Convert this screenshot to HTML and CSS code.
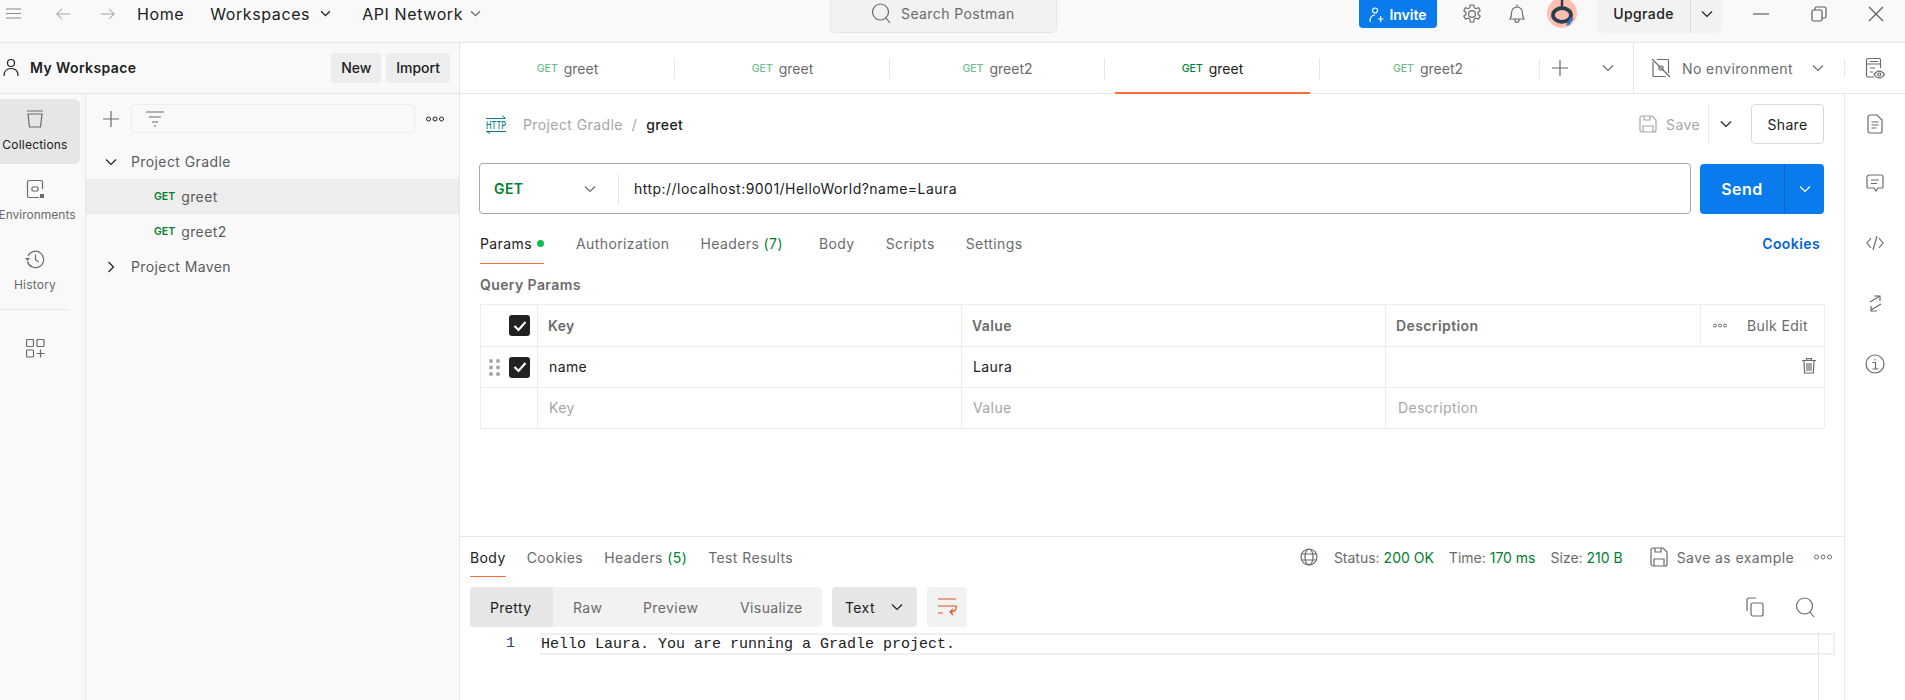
FILE: index.html
```html
<!DOCTYPE html>
<html lang="en">
  <head>
    <meta charset="UTF-8" />
    <title>Postman</title>
    <link rel="stylesheet" href="styles.css">
  </head>
  <body>
    <header class="topbar">
      <div class="top-left">
        <svg class="ico hamburger" width="16" height="11" viewBox="0 0 16 11"><path d="M0 1h15M0 5.500h15M0 10h15"/></svg>
        <svg class="ico nav-arrow" width="16" height="14" viewBox="0 0 18 16"><path d="M17 8H2M8 2 2 8l6 6"/></svg>
        <svg class="ico nav-arrow nav-forward" width="16" height="14" viewBox="0 0 18 16"><path d="M1 8h15M10 2l6 6-6 6"/></svg>
        <span class="top-link home-link">Home</span>
        <span class="top-link ws-link">Workspaces</span>
        <svg class="ico chev-dark ws-chev" width="11" height="7" viewBox="0 0 12 8"><path d="m1 1.500 5 5 5-5"/></svg>
        <span class="top-link api-link">API Network</span>
        <svg class="ico chev-dark api-chev" width="11" height="7" viewBox="0 0 12 8"><path d="m1 1.500 5 5 5-5"/></svg>
      </div>
      <div class="search">
        <svg class="ico" width="20" height="22" viewBox="0 0 20 22"><circle cx="9.500" cy="10" r="8"/><path d="m15 16 4 5"/></svg>
        <span>Search Postman</span>
      </div>
      <div class="top-right">
        <button class="invite">
          <svg class="ico" width="15" height="17" viewBox="0 0 15 17"><circle cx="6" cy="4.500" r="2.500"/><path d="M1 16c0-5 2-7 5-7M9 13h5.500M11.700 10v6"/></svg>
          Invite
        </button>
        <svg class="ico gear" width="20" height="20" viewBox="0 0 20 20"><path d="M8.300 1h3.400l.5 2.700 1.700 1 2.600-1 1.700 3-2.100 1.700v2l2.100 1.700-1.700 3-2.600-1-1.700 1-.5 2.900H8.300l-.5-2.900-1.700-1-2.600 1-1.700-3 2.100-1.700v-2L1.800 6.700l1.700-3 2.600 1 1.700-1z"/><circle cx="10" cy="10" r="3.400"/></svg>
        <svg class="ico bell" width="18" height="22" viewBox="0 0 18 22"><path d="M2 16c1.200-1.500 1.500-3 1.500-6 0-3.500 2.500-6 5.500-6s5.500 2.500 5.500 6c0 3 .3 4.500 1.500 6zM9 4V1.500M7 16.500c0 4 4 4 4 0"/></svg>
        <svg class="avatar" width="30" height="30" viewBox="0 0 30 30">
          <ellipse cx="15" cy="15" rx="15" ry="15" fill="#fcbfb1"/>
          <path d="M3 20 17 2M9 28 28 7" stroke="#f9a896" fill="none"/>
          <ellipse cx="15" cy="17" rx="9" ry="6.800" fill="#fcbfb1" stroke="#2c3d4a" stroke-width="3.800"/>
          <rect x="13.800" y="0" width="2.400" height="9" fill="#2c3d4a"/>
          <path d="m20 25 4-6 2.500 1.800-4 6-3 1z" fill="#2f6fd0"/>
        </svg>
        <div class="upgrade">
          <span class="upgrade-label">Upgrade</span>
          <span class="upgrade-caret">
            <svg class="ico chev-dark" width="12" height="8" viewBox="0 0 12 8"><path d="m1 1.500 5 5 5-5"/></svg>
          </span>
        </div>
        <svg class="ico win-btn win-min" width="16" height="2" viewBox="0 0 16 2"><path d="M0 1h16"/></svg>
        <svg class="ico win-btn win-max" width="16" height="16" viewBox="0 0 16 16"><rect x="1" y="4" width="10" height="11" rx="1.500"/><path d="M4 4V2.500Q4 1 5.500 1H13.500Q15 1 15 2.500V10.500Q15 12 13.500 12H11"/></svg>
        <svg class="ico win-btn win-close" width="16" height="16" viewBox="0 0 16 16"><path d="m1 1 14 14M15 1 1 15"/></svg>
      </div>
    </header>

    <div class="main">
      <aside class="sidebar">
        <div class="ws-head">
          <svg class="ico ws-user" width="18" height="20" viewBox="0 0 18 20"><circle cx="9" cy="5" r="3.500"/><path d="M2 18c0-5 3-7.500 7-7.500s7 2.500 7 7.500"/></svg>
          <span class="ws-name">My Workspace</span>
          <button class="soft-btn new-btn">New</button>
          <button class="soft-btn">Import</button>
        </div>
        <div class="side-body">
          <nav class="rail">
            <div class="rail-item rail-active">
              <svg class="ico" width="18" height="20" viewBox="0 0 18 20"><path d="M1 2h16M2 5h14l-1.500 13h-11z"/></svg>
              <span>Collections</span>
            </div>
            <div class="rail-item">
              <svg class="ico" width="18" height="20" viewBox="0 0 18 20"><path d="M16.500 10V3a1.500 1.500 0 0 0-1.500-1.500H3A1.500 1.500 0 0 0 1.500 3v14A1.500 1.500 0 0 0 3 18.500h10"/><rect x="6" y="8" width="6" height="4" rx="1"/><rect x="14" y="15" width="4" height="4" fill="currentColor" stroke="none"/></svg>
              <span class="rail-env">Environments</span>
            </div>
            <div class="rail-item">
              <svg class="ico" width="20" height="20" viewBox="0 0 20 20"><path d="M3 7a8.200 8.200 0 1 1-.5 5.500M10.500 5.500V10.500l3 2.500"/><path d="M0 9h5L2.500 12z" fill="currentColor" stroke="none"/></svg>
              <span>History</span>
            </div>
            <div class="rail-sep"></div>
            <svg class="ico rail-add" width="19" height="19" viewBox="0 0 19 19"><rect x=".5" y=".5" width="7" height="7" rx="1"/><rect x="11" y=".5" width="7" height="7" rx="1"/><rect x=".5" y="11" width="7" height="7" rx="1"/><path d="M10.500 14.500h8M14.500 10.500v8"/></svg>
          </nav>
          <div class="tree">
            <div class="tree-tools">
              <svg class="ico" width="16" height="16" viewBox="0 0 16 16"><path d="M8 0v16M0 8h16"/></svg>
              <div class="filter">
                <svg class="ico" width="18" height="16" viewBox="0 0 18 16"><path d="M0 1h18M3 6h12M6 11h6M8 15h2"/></svg>
              </div>
              <svg class="dots" width="18" height="6" viewBox="0 0 18 6"><circle cx="2.500" cy="3" r="2"/><circle cx="9" cy="3" r="2"/><circle cx="15.500" cy="3" r="2"/></svg>
            </div>
            <div class="tree-list">
              <div class="tree-row">
                <svg class="ico chev-dark tree-chev" width="12" height="8" viewBox="0 0 12 8"><path d="m1 1.500 5 5 5-5"/></svg>
                <span>Project Gradle</span>
              </div>
              <div class="tree-row tree-req tree-selected"><span class="get">GET</span><span>greet</span></div>
              <div class="tree-row tree-req"><span class="get">GET</span><span>greet2</span></div>
              <div class="tree-row">
                <svg class="ico chev-dark tree-chev-right" width="8" height="12" viewBox="0 0 8 12"><path d="m1.500 1 5 5-5 5"/></svg>
                <span>Project Maven</span>
              </div>
            </div>
          </div>
        </div>
      </aside>

      <section class="content">
        <div class="tabbar">
          <div class="tab"><span class="get">GET</span><span>greet</span></div>
          <div class="tab"><span class="get">GET</span><span>greet</span></div>
          <div class="tab"><span class="get">GET</span><span>greet2</span></div>
          <div class="tab tab-active"><span class="get">GET</span><span>greet</span></div>
          <div class="tab tab-last"><span class="get">GET</span><span>greet2</span></div>
          <div class="tab-tools">
            <svg class="ico" width="16" height="16" viewBox="0 0 16 16"><path d="M8 0v16M0 8h16"/></svg>
            <svg class="ico" width="12" height="8" viewBox="0 0 12 8"><path d="m1 1.500 5 5 5-5"/></svg>
          </div>
          <div class="env">
            <svg class="ico" width="20" height="20" viewBox="0 0 20 20"><path d="M17.500 15V2.500a1 1 0 0 0-1-1H6M2 4v13.500a1 1 0 0 0 1 1h11.500M1 1l18 18"/><rect x="8" y="8" width="4" height="4" rx="1"/></svg>
            <span class="env-name">No environment</span>
            <svg class="ico env-chev" width="12" height="8" viewBox="0 0 12 8"><path d="m1 1.500 5 5 5-5"/></svg>
          </div>
          <div class="env-view">
            <svg class="ico" width="20" height="22" viewBox="0 0 20 22"><path d="M9 20H3a1.500 1.500 0 0 1-1.500-1.500V3A1.500 1.500 0 0 1 3 1.500h11A1.500 1.500 0 0 1 15.500 3v8M1.500 7h14M5 11h5M5 15h3M5 4.500h8"/><path d="M9 17.500c3-4.500 7.500-4.500 10.500 0-3 4.500-7.500 4.500-10.500 0z"/><circle cx="14.300" cy="17.500" r="1.500"/></svg>
          </div>
        </div>

        <div class="work">
          <div class="panes">
            <div class="request">
              <div class="req-head">
                <svg class="http-icon" width="20" height="19" viewBox="0 0 20 19">
                  <path d="M0 3.500h19.500M16 .5l3.500 3M20 16.500H.5M4 18.500l-3.500-2" fill="none" stroke="#097a87"/>
                  <text transform="scale(.68 1)" x="0" y="14" class="http-text">HTTP</text>
                </svg>
                <span class="crumb">Project Gradle</span>
                <span class="crumb crumb-slash">/</span>
                <span class="crumb-current">greet</span>
                <div class="req-actions">
                  <svg class="ico save-ico" width="18" height="18" viewBox="0 0 18 18"><path d="M1 3a2 2 0 0 1 2-2h10l4 4v10a2 2 0 0 1-2 2H3a2 2 0 0 1-2-2zM5 1v4h6V1M4 17v-6h10v6"/></svg>
                  <span class="save-label">Save</span>
                  <span class="save-caret">
                    <svg class="ico chev-dark" width="12" height="8" viewBox="0 0 12 8"><path d="m1 1.500 5 5 5-5"/></svg>
                  </span>
                  <button class="share">Share</button>
                </div>
              </div>

              <div class="url-line">
                <div class="url-bar">
                  <span class="method">GET</span>
                  <svg class="ico" width="12" height="8" viewBox="0 0 12 8"><path d="m1 1.500 5 5 5-5"/></svg>
                  <span class="url-sep"></span>
                  <span class="url-text">http://localhost:9001/HelloWorld?name=Laura</span>
                </div>
                <div class="send">
                  <span class="send-label">Send</span>
                  <span class="send-caret">
                    <svg class="ico" width="12" height="8" viewBox="0 0 12 8"><path d="m1 1.500 5 5 5-5"/></svg>
                  </span>
                </div>
              </div>

              <div class="req-tabs">
                <span class="req-tab req-tab-active"><span>Params</span><i class="dot"></i></span>
                <span class="req-tab req-tab-auth">Authorization</span>
                <span class="req-tab">Headers <em>(7)</em></span>
                <span class="req-tab req-tab-body">Body</span>
                <span class="req-tab">Scripts</span>
                <span class="req-tab">Settings</span>
                <span class="cookies-link">Cookies</span>
              </div>

              <div class="query-title">Query Params</div>

              <div class="params">
                <div class="param-row param-head">
                  <div class="cell cell-check"><span class="check"><svg width="14" height="12" viewBox="0 0 14 12"><path d="m1.500 6 4 4 7-8" fill="none" stroke="#fff" stroke-width="2.200"/></svg></span></div>
                  <div class="cell">Key</div>
                  <div class="cell">Value</div>
                  <div class="cell cell-desc">
                    <span class="desc-label">Description</span>
                    <div class="bulk">
                      <svg class="dots dots-dark" width="14" height="5" viewBox="0 0 14 5"><circle cx="2" cy="2.500" r="1.500"/><circle cx="7" cy="2.500" r="1.500"/><circle cx="12" cy="2.500" r="1.500"/></svg>
                      <span>Bulk Edit</span>
                    </div>
                  </div>
                </div>
                <div class="param-row">
                  <div class="cell cell-check">
                    <svg class="grip" width="11" height="17" viewBox="0 0 11 17"><circle cx="2" cy="2" r="2"/><circle cx="9" cy="2" r="2"/><circle cx="2" cy="8.500" r="2"/><circle cx="9" cy="8.500" r="2"/><circle cx="2" cy="15" r="2"/><circle cx="9" cy="15" r="2"/></svg>
                    <span class="check"><svg width="14" height="12" viewBox="0 0 14 12"><path d="m1.500 6 4 4 7-8" fill="none" stroke="#fff" stroke-width="2.200"/></svg></span>
                  </div>
                  <div class="cell cell-val">name</div>
                  <div class="cell cell-val">Laura</div>
                  <div class="cell cell-val cell-trash">
                    <svg class="ico" width="14" height="16" viewBox="0 0 14 16"><path d="M0 2.500h14M4.500 2.500V.7h5v1.800M2 2.500l.6 12.500h8.800L12 2.500M5 5v8M7 5v8M9 5v8"/></svg>
                  </div>
                </div>
                <div class="param-row param-empty">
                  <div class="cell cell-check"></div>
                  <div class="cell cell-val">Key</div>
                  <div class="cell cell-val">Value</div>
                  <div class="cell cell-val cell-desc-ph">Description</div>
                </div>
              </div>
            </div>

            <div class="response">
              <div class="res-head">
                <span class="res-tab res-tab-active">Body</span>
                <span class="res-tab">Cookies</span>
                <span class="res-tab">Headers <em>(5)</em></span>
                <span class="res-tab">Test Results</span>
                <div class="res-meta">
                  <svg class="ico globe" width="18" height="18" viewBox="0 0 18 18"><circle cx="9" cy="9" r="8"/><ellipse cx="9" cy="9" rx="4" ry="8"/><path d="M1.500 6h15M1.500 12h15"/></svg>
                  <span class="meta">Status: <em>200 OK</em></span>
                  <span class="meta">Time: <em>170 ms</em></span>
                  <span class="meta">Size: <em>210 B</em></span>
                  <svg class="ico save-dark" width="18" height="20" viewBox="0 0 18 20"><path d="M1 3a2 2 0 0 1 2-2h10l4 4v12a2 2 0 0 1-2 2H3a2 2 0 0 1-2-2zM5 1v4h6V1M4 19v-7h10v7"/></svg>
                  <span class="save-example">Save as example</span>
                  <svg class="dots dots-dark" width="18" height="6" viewBox="0 0 18 6"><circle cx="2.500" cy="3" r="2"/><circle cx="9" cy="3" r="2"/><circle cx="15.500" cy="3" r="2"/></svg>
                </div>
              </div>

              <div class="res-tools">
                <div class="format-group">
                  <span class="format format-on">Pretty</span>
                  <span class="format format-raw">Raw</span>
                  <span class="format format-preview">Preview</span>
                  <span class="format format-vis">Visualize</span>
                </div>
                <div class="lang">
                  <span>Text</span>
                  <svg class="ico chev-dark" width="12" height="8" viewBox="0 0 12 8"><path d="m1 1.500 5 5 5-5"/></svg>
                </div>
                <div class="wrap-btn">
                  <svg class="ico wrap-ico" width="20" height="18" viewBox="0 0 20 18"><path d="M1 1h18M1 8h18c1 4-2 6-6 6M16 11l-3 3 3 3M1 15h5"/></svg>
                </div>
                <div class="res-icons">
                  <svg class="ico" width="18" height="20" viewBox="0 0 18 20"><rect x="5" y="6" width="12" height="13" rx="2"/><path d="M1 14V3a2 2 0 0 1 2-2h7"/></svg>
                  <svg class="ico" width="20" height="22" viewBox="0 0 20 22"><circle cx="9.500" cy="10" r="8"/><path d="m15 16 4 5"/></svg>
                </div>
              </div>

              <div class="editor">
                <span class="line-no">1</span>
                <div class="code-line">Hello Laura. You are running a Gradle project.</div>
              </div>
            </div>
          </div>

          <aside class="side-tools">
            <svg class="ico tool-doc" width="16" height="20" viewBox="0 0 16 20"><path d="M1 3a2 2 0 0 1 2-2h7l5 5v11a2 2 0 0 1-2 2H3a2 2 0 0 1-2-2zM4.500 8h7M4.500 11h7M4.500 14h5"/></svg>
            <svg class="ico tool-chat" width="18" height="18" viewBox="0 0 18 18"><path d="M1 3a2 2 0 0 1 2-2h12a2 2 0 0 1 2 2v10a1 1 0 0 1-1 1h-4l-2 3-2-3H2a1 1 0 0 1-1-1zM5 6h8M5 9.500h6"/></svg>
            <svg class="ico tool-code" width="18" height="16" viewBox="0 0 18 16"><path d="M5 3 1 8l4 5M13 3l4 5-4 5M11 1 7 15"/></svg>
            <svg class="ico tool-expand" width="13" height="17" viewBox="0 0 13 17"><path d="M1 7l10-6M5 1h6v5M12 9 2 15M8 16H2v-5"/></svg>
            <svg class="ico tool-info" width="20" height="20" viewBox="0 0 20 20"><circle cx="10" cy="10" r="9"/><path d="M7.500 8.500H10.500V15M7.500 15h6M10 5v1.500"/></svg>
          </aside>
        </div>
      </section>
    </div>
  </body>
</html>
```

FILE: styles.css
```css
* {
  box-sizing: border-box;
}
html,
body {
  margin: 0;
  height: 700px;
  overflow: hidden;
}
body {
  font-family: Inter, "Liberation Sans", sans-serif;
  font-size: 14px;
  letter-spacing: 0.4px;
  color: #212121;
  background: #fff;
}
button {
  font-family: inherit;
  border: none;
  cursor: pointer;
}
em {
  font-style: normal;
  color: #007f31;
}
.ico {
  fill: none;
  stroke: currentColor;
  stroke-width: 1.2;
  flex: none;
  color: #6b6b6b;
}
.chev-dark {
  color: #212121;
}
.dots {
  flex: none;
  fill: none;
  stroke: #212121;
  stroke-width: 1;
}
.dots-dark {
  stroke: #6b6b6b;
}

/* --- top bar --- */
.topbar {
  display: flex;
  height: 43px;
  background: #f9f9f9;
  border-bottom: 1px solid #e6e6e6;
}
.top-left {
  display: flex;
  align-items: center;
  width: 830px;
  height: 27px;
  padding-left: 6px;
}
.top-link {
  font-size: 16px;
  letter-spacing: 0.6px;
  white-space: nowrap;
}
.hamburger {
  color: #8a8a8a;
}
.nav-arrow {
  margin-left: 33px;
  color: #a6a6a6;
}
.nav-forward {
  margin-left: 29px;
}
.home-link {
  margin-left: 21px;
}
.ws-link {
  margin-left: 26px;
}
.ws-chev {
  margin-left: 10px;
  stroke-width: 1.5;
}
.api-link {
  margin-left: 31px;
}
.api-chev {
  margin-left: 7px;
  color: #6b6b6b;
  stroke-width: 1.5;
}
.search {
  display: flex;
  align-items: center;
  gap: 10px;
  width: 227px;
  height: 33px;
  padding: 0 0 6px 40px;
  background: #f2f2f2;
  border: 1px solid #e6e6e6;
  border-top: none;
  border-radius: 0 0 5px 5px;
  color: #6b6b6b;
}
.top-right {
  display: flex;
  align-items: center;
  flex: 1;
  height: 28px;
  padding-left: 302px;
}
.invite {
  display: flex;
  align-items: center;
  justify-content: center;
  gap: 5px;
  width: 78px;
  height: 28px;
  background: #097bed;
  color: #fff;
  font-size: 14px;
  font-weight: 600;
  border-radius: 0 0 4px 4px;
}
.invite .ico {
  color: #fff;
}
.gear {
  margin-left: 25px;
}
.bell {
  margin-left: 26px;
}
.avatar {
  flex: none;
  margin-left: 21px;
  align-self: flex-start;
  margin-top: -2px;
}
.upgrade {
  display: flex;
  align-items: center;
  flex: none;
  width: 125px;
  height: 33px;
  margin-left: 20px;
  align-self: flex-start;
  background: #f2f2f2;
  border-radius: 0 0 5px 5px;
  font-weight: 500;
}
.upgrade-label {
  width: 93px;
  text-align: center;
  padding-bottom: 6px;
}
.upgrade-caret {
  display: flex;
  align-items: center;
  justify-content: center;
  flex: 1;
  height: 33px;
  padding-bottom: 6px;
  border-left: 1px solid #d9d9d9;
}
.win-btn {
  color: #5c5c5c;
}
.win-min {
  margin-left: 31px;
}
.win-max {
  margin-left: 42px;
}
.win-close {
  margin-left: 41px;
}

/* --- sidebar --- */
.main {
  display: flex;
  height: 657px;
}
.sidebar {
  width: 460px;
  flex: none;
  background: #f9f9f9;
  border-right: 1px solid #e6e6e6;
}
.ws-head {
  display: flex;
  align-items: center;
  height: 51px;
  padding: 0 9px 1px 2px;
  border-bottom: 1px solid #e6e6e6;
}
.ws-user {
  color: #212121;
}
.ws-name {
  margin-left: 10px;
  font-weight: 600;
  flex: 1;
}
.soft-btn {
  height: 30px;
  padding: 0 10px;
  background: #ededed;
  color: #212121;
  font-size: 14px;
  font-weight: 500;
  border-radius: 4px;
}
.new-btn {
  width: 50px;
  margin-right: 5px;
}
.side-body {
  display: flex;
  height: 606px;
}
.rail {
  display: flex;
  flex-direction: column;
  align-items: flex-start;
  width: 86px;
  flex: none;
  padding-top: 5px;
  border-right: 1px solid #e6e6e6;
}
.rail-item {
  display: flex;
  flex-direction: column;
  align-items: center;
  gap: 8px;
  width: 80px;
  height: 65px;
  padding: 10px 10px 0 0;
  margin-bottom: 5px;
  font-size: 12px;
  letter-spacing: 0.2px;
  color: #6b6b6b;
  white-space: nowrap;
}
.rail-env {
  margin-left: 4px;
  letter-spacing: 0;
}
.rail-active {
  background: #e6e6e6;
  color: #212121;
  border-radius: 0 6px 6px 0;
}
.rail-sep {
  width: 70px;
  height: 1px;
  background: #e6e6e6;
}
.rail-add {
  margin: 29px 0 0 26px;
}
.tree {
  flex: 1;
}
.tree-tools {
  display: flex;
  align-items: center;
  height: 29px;
  margin-top: 10px;
  padding-left: 17px;
}
.filter {
  display: flex;
  align-items: center;
  width: 284px;
  height: 29px;
  margin-left: 12px;
  margin-right: 11px;
  padding-left: 14px;
  background: #f9f9f9;
  border: 1px solid #ededed;
  border-radius: 3px;
}
.tree-list {
  margin-top: 11px;
}
.tree-row {
  display: flex;
  align-items: center;
  height: 35px;
  padding-left: 19px;
  color: #5c5c5c;
  white-space: nowrap;
}
.tree-chev {
  margin-right: 14px;
}
.tree-chev-right {
  margin-left: 2px;
  margin-right: 16px;
}
.tree-req {
  gap: 6px;
  padding-left: 68px;
}
.tree-selected {
  background: #ededed;
}
.get {
  font-size: 10.5px;
  font-weight: 600;
  letter-spacing: 0;
  color: #007f31;
}

/* --- tabs --- */
.content {
  flex: 1;
  display: flex;
  flex-direction: column;
  min-width: 0;
}
.tabbar {
  display: flex;
  align-items: stretch;
  height: 51px;
  border-bottom: 1px solid #e6e6e6;
}
.tab {
  display: flex;
  align-items: center;
  justify-content: center;
  gap: 6px;
  position: relative;
  width: 215px;
  height: 50px;
  color: #6b6b6b;
  letter-spacing: 0;
  white-space: nowrap;
}
.tab::after {
  content: "";
  position: absolute;
  right: 0;
  top: 15px;
  height: 21px;
  width: 1px;
  background: #e6e6e6;
}
.tab .get {
  color: #6fba8e;
  font-weight: 500;
}
.tab-last {
  width: 220px;
  padding-right: 4px;
}
.tab-active {
  color: #212121;
}
.tab-active::before {
  content: "";
  position: absolute;
  left: 10px;
  right: 10px;
  bottom: -1px;
  height: 2px;
  background: #ff6c37;
}
.tab-active .get {
  color: #007f31;
}
.tab-tools {
  display: flex;
  align-items: center;
  gap: 34px;
  width: 94px;
  padding-left: 12px;
  border-right: 1px solid #e6e6e6;
}
.env {
  display: flex;
  align-items: center;
  width: 210px;
  padding-left: 17px;
}
.env-name {
  margin-left: 11px;
  color: #6b6b6b;
  white-space: nowrap;
}
.env-chev {
  margin-left: 19px;
}
.env-view {
  flex: 1;
  display: flex;
  align-items: center;
  justify-content: center;
  margin: 15px 0;
  border-left: 1px solid #e6e6e6;
}

/* --- request --- */
.work {
  flex: 1;
  display: flex;
  min-height: 0;
}
.panes {
  flex: none;
  width: 1384px;
}
.request {
  height: 443px;
  padding: 10px 20px 0 19px;
  border-bottom: 1px solid #e6e6e6;
}
.req-head {
  display: flex;
  align-items: center;
  height: 40px;
  margin-bottom: 19px;
}
.http-icon {
  flex: none;
  margin-left: 7px;
}
.http-text {
  font-size: 11px;
  font-weight: 500;
  letter-spacing: 0;
  fill: #097a87;
}
.crumb {
  margin-left: 17px;
  color: #a6a6a6;
}
.crumb-slash {
  margin-left: 9px;
}
.crumb-current {
  margin-left: 9px;
  font-weight: 500;
}
.req-actions {
  display: flex;
  align-items: center;
  margin-left: auto;
  height: 40px;
}
.save-ico {
  color: #a6a6a6;
}
.save-label {
  margin-left: 9px;
  color: #a6a6a6;
}
.save-caret {
  display: flex;
  align-items: center;
  height: 40px;
  margin-left: 8px;
  padding-left: 11px;
  border-left: 1px solid #e6e6e6;
}
.share {
  width: 73px;
  height: 40px;
  margin-left: 19px;
  background: #fff;
  color: #212121;
  font-size: 14px;
  letter-spacing: 0.3px;
  border: 1px solid #d9d9d9;
  border-radius: 4px;
}
.url-line {
  display: flex;
  gap: 9px;
  height: 51px;
}
.url-bar {
  display: flex;
  align-items: center;
  width: 1212px;
  padding-left: 14px;
  border: 1px solid #a6a6a6;
  border-radius: 4px;
}
.method {
  width: 90px;
  font-weight: 600;
  color: #007f31;
}
.url-sep {
  width: 1px;
  height: 29px;
  margin-left: 22px;
  background: #e6e6e6;
}
.url-text {
  margin-left: 15px;
  letter-spacing: 0.47px;
}
.send {
  display: flex;
  align-items: center;
  width: 124px;
  margin: 1px 0 0;
  color: #fff;
  background: #097bed;
  border-radius: 4px;
}
.send-label {
  width: 84px;
  text-align: center;
  font-size: 16px;
  font-weight: 600;
  letter-spacing: 0.5px;
}
.send-caret {
  display: flex;
  align-items: center;
  justify-content: center;
  flex: 1;
  height: 100%;
  border-left: 1px solid #0265d2;
}
.send-caret .ico {
  color: #fff;
}
.req-tabs {
  display: flex;
  align-items: center;
  height: 50px;
  padding: 9px 0 0 1px;
  gap: 31px;
}
.req-tab {
  display: flex;
  align-items: center;
  position: relative;
  height: 41px;
  color: #6b6b6b;
  white-space: pre;
}
.req-tab-auth {
  margin-left: 1px;
}
.req-tab-body {
  margin-left: 5px;
}
.req-tab-active {
  gap: 5px;
  color: #212121;
}
.req-tab-active::after {
  content: "";
  position: absolute;
  left: 0;
  right: 0;
  bottom: 0;
  height: 1px;
  background: #ff6c37;
}
.dot {
  width: 7px;
  height: 7px;
  border-radius: 50%;
  background: #0cbb52;
}
.cookies-link {
  margin-left: auto;
  margin-right: 4px;
  color: #0265d2;
  font-weight: 600;
}
.query-title {
  margin: 11px 0 0 1px;
  height: 20px;
  line-height: 20px;
  color: #6b6b6b;
  font-weight: 600;
}

/* --- params table --- */
.params {
  width: 1345px;
  margin: 9px 0 0 1px;
  border: 1px solid #ededed;
  border-bottom: none;
}
.param-row {
  display: grid;
  grid-template-columns: 56px 424px 424px 1fr;
  height: 41px;
  border-bottom: 1px solid #ededed;
}
.param-head {
  height: 42px;
}
.cell {
  display: flex;
  align-items: center;
  padding-left: 10px;
  border-left: 1px solid #ededed;
  font-weight: 600;
  color: #6b6b6b;
}
.cell:first-child {
  border-left: none;
}
.cell-check {
  justify-content: flex-end;
  padding: 0 7px 0 0;
  gap: 9px;
}
.cell-val {
  padding: 0 0 2px 11px;
  font-weight: 400;
  color: #212121;
}
.param-empty .cell-val {
  color: #a6a6a6;
}
.cell-desc-ph {
  padding-left: 12px;
}
.cell-trash {
  justify-content: flex-end;
  padding-right: 8px;
}
.cell-desc {
  padding-left: 0;
}
.desc-label {
  flex: 1;
  padding-left: 10px;
}
.bulk {
  display: flex;
  align-items: center;
  gap: 20px;
  width: 124px;
  height: 100%;
  padding-left: 12px;
  border-left: 1px solid #ededed;
  font-weight: 400;
}
.check {
  display: flex;
  align-items: center;
  justify-content: center;
  width: 21px;
  height: 21px;
  background: #212121;
  border-radius: 3px;
}
.grip {
  fill: #a6a6a6;
}

/* --- response --- */
.res-head {
  display: flex;
  align-items: center;
  gap: 21px;
  height: 40px;
  padding: 0 12px 0 10px;
}
.res-tab {
  display: flex;
  align-items: center;
  position: relative;
  height: 40px;
  color: #6b6b6b;
  white-space: pre;
}
.res-tab-active {
  color: #212121;
}
.res-tab-active::after {
  content: "";
  position: absolute;
  left: 0;
  right: 0;
  bottom: 0;
  height: 1px;
  background: #ff6c37;
}
.res-meta {
  display: flex;
  align-items: center;
  margin-left: auto;
  color: #6b6b6b;
}
.meta {
  margin-left: 15px;
  letter-spacing: 0;
  white-space: pre;
}
.globe + .meta {
  margin-left: 16px;
}
.save-dark {
  margin-left: 27px;
}
.save-example {
  margin-left: 9px;
  margin-right: 20px;
}
.res-tools {
  display: flex;
  align-items: center;
  height: 40px;
  margin-top: 10px;
  padding: 0 29px 0 10px;
}
.format-group {
  display: flex;
  align-items: center;
  width: 352px;
  height: 40px;
  background: #f2f2f2;
  border-radius: 4px;
  color: #6b6b6b;
}
.format {
  display: flex;
  align-items: center;
  height: 40px;
  padding-left: 20px;
}
.format-on {
  width: 83px;
  background: #e6e6e6;
  color: #212121;
  border-radius: 4px 0 0 4px;
}
.format-raw {
  width: 70px;
}
.format-preview {
  width: 97px;
}
.lang {
  display: flex;
  align-items: center;
  gap: 16px;
  width: 85px;
  height: 40px;
  margin-left: 10px;
  padding-left: 13px;
  background: #e6e6e6;
  border-radius: 4px;
}
.wrap-btn {
  display: flex;
  align-items: center;
  justify-content: center;
  width: 40px;
  height: 40px;
  margin-left: 10px;
  background: #f2f2f2;
  border-radius: 4px;
}
.wrap-ico {
  color: #e05320;
}
.res-icons {
  display: flex;
  align-items: center;
  gap: 31px;
  margin-left: auto;
}
.editor {
  display: flex;
  height: 67px;
  margin-top: 6px;
  font-family: "Liberation Mono", monospace;
  font-size: 15px;
  letter-spacing: 0;
  position: relative;
}
.editor::after {
  content: "";
  position: absolute;
  left: 1358px;
  top: 0;
  bottom: 0;
  width: 1px;
  background: #e6e6e6;
}
.line-no {
  width: 80px;
  padding: 2px 0 0 46px;
  color: #31436d;
}
.code-line {
  width: 1295px;
  height: 22px;
  line-height: 19px;
  border: 2px solid #f0f0f0;
  border-left-width: 1px;
  white-space: pre;
}

/* --- right tool rail --- */
.side-tools {
  flex: 1;
  display: flex;
  flex-direction: column;
  align-items: center;
  padding-top: 20px;
  border-left: 1px solid #e6e6e6;
}
.tool-chat {
  margin-top: 40px;
}
.tool-code {
  margin-top: 43px;
}
.tool-expand {
  margin-top: 44px;
}
.tool-info {
  margin-top: 42px;
}
```
